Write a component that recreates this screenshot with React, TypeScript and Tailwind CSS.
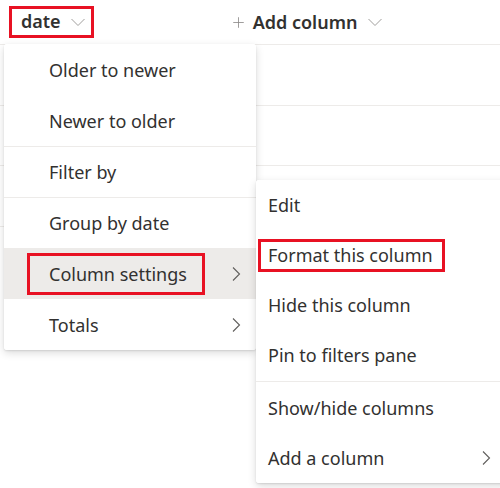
import React from 'react';

const font = { fontFamily: '"Noto Sans", "Open Sans", sans-serif' };

function ChevronDown({ className }: { className?: string }) {
  return (
    <svg viewBox="0 0 16 16" className={className} fill="none" stroke="currentColor" strokeWidth="1">
      <path d="M1.5 5 L8 11.5 L14.5 5" />
    </svg>
  );
}

function ChevronRight({ className }: { className?: string }) {
  return (
    <svg viewBox="0 0 16 16" className={className} fill="none" stroke="currentColor" strokeWidth="1.1">
      <path d="M5 1.5 L11.5 8 L5 14.5" />
    </svg>
  );
}

function PlusIcon({ className }: { className?: string }) {
  return (
    <svg viewBox="0 0 16 16" className={className} fill="none" stroke="currentColor" strokeWidth="1">
      <path d="M8 1.5 V14.5 M1.5 8 H14.5" />
    </svg>
  );
}

type Item = { label: string; sub?: boolean; active?: boolean; box?: string; sepBefore?: boolean };

// red callout boxes from the screenshot annotation
const mainBox = '-ml-[22px] border-[3px] border-[#e81123] pl-[19px] pr-[15px] py-[1px] leading-[34px]';
const subBox = '-ml-[10px] border-[3px] border-[#e81123] pl-[7px] pr-[9px] leading-[27px]';

const mainItems: Item[] = [
  { label: 'Older to newer' },
  { label: 'Newer to older' },
  { label: 'Filter by', sepBefore: true },
  { label: 'Group by date', sepBefore: true },
  { label: 'Column settings', sub: true, active: true, box: mainBox },
  { label: 'Totals', sub: true },
];

const subItems: Item[] = [
  { label: 'Edit' },
  { label: 'Format this column', box: subBox },
  { label: 'Hide this column' },
  { label: 'Pin to filters pane' },
  { label: 'Show/hide columns', sepBefore: true },
  { label: 'Add a column', sub: true },
];

function Menu({
  items,
  itemCls,
  sepCls,
  afterSepH,
}: {
  items: Item[];
  itemCls: string;
  sepCls: string;
  afterSepH: string;
}) {
  return (
    <div className="flex flex-col">
      {items.map((it) => (
        <React.Fragment key={it.label}>
          {it.sepBefore && <div className={`h-px bg-[#edebe9] ${sepCls}`} />}
          <div
            className={`flex items-center justify-between text-[18px] text-[#323130] ${itemCls} ${
              it.sepBefore ? afterSepH : ''
            } ${it.active ? 'bg-[#edebe9]' : 'bg-white'}`}
          >
            <span className={it.box ?? 'leading-[34px]'}>{it.label}</span>
            {it.sub && <ChevronRight className="h-[16px] w-[16px] text-[#605e5c]" />}
          </div>
        </React.Fragment>
      ))}
    </div>
  );
}

export default function App() {
  return (
    <div className="relative h-[488px] w-[500px] overflow-hidden bg-white" style={font}>
      {/* list header */}
      <div className="flex h-[45px] items-center border-b border-[#edebe9]">
        <div className="ml-[9px] flex h-[32px] items-center gap-[9px] border-[3px] border-[#e81123] pl-[9px] pr-[5px] text-[18px] font-semibold text-[#323130]">
          <span className="-mt-[2px]">date</span>
          <ChevronDown className="h-[16px] w-[16px] text-[#a19f9d]" />
        </div>
        <div className="ml-[138px] flex items-center gap-[8px] text-[18px] font-semibold text-[#323130]">
          <PlusIcon className="h-[13px] w-[13px] text-[#8a8886]" />
          <span>Add column</span>
          <ChevronDown className="ml-[2px] h-[16px] w-[16px] text-[#a19f9d]" />
        </div>
      </div>
      {/* list rows */}
      <div className="h-[61px] border-b border-[#edebe9]" />
      <div className="h-[60px] border-b border-[#edebe9]" />
      <div className="h-[61px] border-b border-[#edebe9]" />

      {/* column menu */}
      <div className="absolute left-[4px] top-[44px] w-[252px] overflow-hidden rounded-[3px] bg-white shadow-[0_3px_8px_rgba(0,0,0,0.14),0_1px_2px_rgba(0,0,0,0.1)]">
        <Menu items={mainItems} itemCls="h-[51px] pl-[45px] pr-3" sepCls="" afterSepH="!h-[50px]" />
      </div>

      {/* column settings submenu */}
      <div className="absolute left-[256px] top-[180px] w-[252px] overflow-hidden rounded-[3px] bg-white shadow-[0_3px_8px_rgba(0,0,0,0.14),0_1px_2px_rgba(0,0,0,0.1)]">
        <Menu items={subItems} itemCls="h-[50px] pl-[12px] pr-[14px]" sepCls="my-[1px]" afterSepH="" />
      </div>
    </div>
  );
}
